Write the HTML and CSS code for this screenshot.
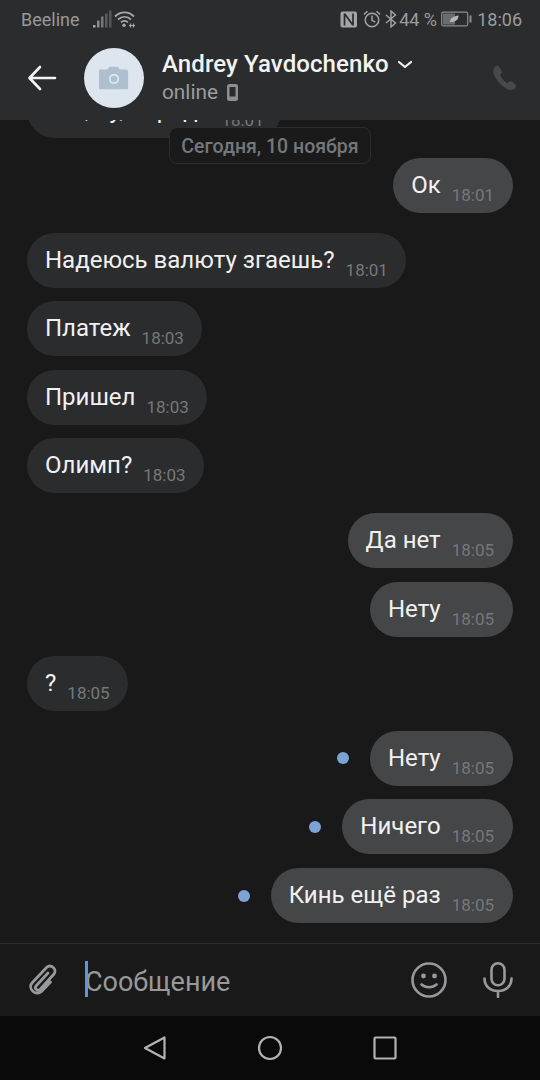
FILE: index.html
```html
<!DOCTYPE html>
<html lang="ru">
<head>
<meta charset="utf-8">
<title>Andrey Yavdochenko</title>
<link rel="stylesheet" href="styles.css">
</head>
<body>
<div class="app">
  <header class="top">
    <div class="status">
      <div class="status-left">
        <span class="carrier">Beeline</span>
        <svg class="ic-signal" width="20" height="18" viewBox="0 0 20 18"><rect x="1" y="15" width="2.500" height="2.500" fill="#a6a8aa"/><rect x="5" y="10.500" width="2.500" height="7" fill="#8a8c8e"/><rect x="9" y="6.500" width="2.500" height="11" fill="#77797b"/><rect x="13" y="3.500" width="2.500" height="14" fill="#5a5c5e"/><rect x="17" y="0.500" width="2.500" height="17" fill="#55575a"/></svg>
        <svg class="ic-wifi" width="22" height="18" viewBox="0 0 22 18" fill="none" stroke="#a6a8aa" stroke-width="1.800"><path d="M1 6.500C6.500 1 14.500 1 20 6.500"/><path d="M4 9.500C8 6 13 6 17 9.500"/><path d="M7 12.300C9.300 10.500 11.700 10.500 14 12.300"/><circle cx="10" cy="15.300" r="1.700" fill="#a6a8aa" stroke="none"/><path d="M15 15.500h6M16.500 13.500v4M19.500 13.500v4" stroke-width="1.200"/></svg>
      </div>
      <div class="status-right">
        <svg class="ic-nfc" width="18" height="17" viewBox="0 0 18 17"><rect x="0.500" y="0.500" width="16.500" height="16" rx="2" fill="#a3a5a7"/><path d="M4.500 2.500v12M13 2.500v12M4.800 3l8 11" fill="none" stroke="#2b2c2e" stroke-width="1.700"/></svg>
        <svg class="ic-alarm" width="18" height="18" viewBox="0 0 18 18" fill="none" stroke="#a3a5a7" stroke-width="1.500"><circle cx="9" cy="10" r="6.800"/><path d="M9 5.500v4.800l3.200 1.900M0.800 4.500L4.500 1.200M17.200 4.500L13.500 1.200"/></svg>
        <svg class="ic-bt" width="12" height="18" viewBox="0 0 12 18" fill="none" stroke="#a3a5a7" stroke-width="1.400"><path d="M1 5l9.500 8-4.500 4V1l4.500 4L1 13"/></svg>
        <span class="batt-pct">44 %</span>
        <svg class="ic-batt" width="31" height="16" viewBox="0 0 31 16"><rect x="0.700" y="1.200" width="26" height="13.600" rx="1.500" fill="none" stroke="#8a8c8e" stroke-width="1.200"/><rect x="2" y="2.500" width="12" height="11" fill="#6a6c6f"/><path d="M9 11c0-4 4-6 8.500-6.500C17.500 9 14 11.500 9 11z" fill="#b5b7b9"/><rect x="28.500" y="4.500" width="2" height="7" fill="#8a8c8e"/></svg>
        <span class="clock">18:06</span>
      </div>
    </div>
    <div class="bar">
      <svg class="ic-back" width="30" height="26" viewBox="0 0 30 26" fill="none" stroke="#f2f3f4" stroke-width="2.600" stroke-linecap="round" stroke-linejoin="round"><path d="M28 13H3M13 2L2.500 13 13 24"/></svg>
      <div class="avatar">
        <svg class="ic-cam" width="30" height="24" viewBox="0 0 32 24"><path d="M3 3h6l2-3h9l2 3h7a2 2 0 0 1 2 1.500V23a1 1 0 0 1-1 1H1a1 1 0 0 1-1-1V5a2 2 0 0 1 3-2z" fill="#aebfd0"/><circle cx="16" cy="13" r="5.500" fill="#dde6ee"/><circle cx="16" cy="13" r="3.500" fill="#aebfd0"/></svg>
      </div>
      <div class="who">
        <div class="name-row">
          <span class="name">Andrey Yavdochenko</span>
          <svg width="16" height="9" viewBox="0 0 16 9" fill="none" stroke="#f2f3f4" stroke-width="2.200" stroke-linecap="round" stroke-linejoin="round"><path d="M2 2l6 5 6-5"/></svg>
        </div>
        <div class="presence">
          <span>online</span>
          <svg width="11" height="17" viewBox="0 0 11 17"><rect x="0" y="0" width="11" height="17" rx="2.500" fill="#8b8e92"/><rect x="2.500" y="3" width="6" height="9.500" fill="#2b2c2e"/></svg>
        </div>
      </div>
      <svg class="ic-phone" width="28" height="28" viewBox="0 0 24 24"><path d="M6.600 1.800c-1-.6-2.500-.3-3.400.8C1.800 4.300 1.500 6.500 2.600 9.300c2 5 6.600 10 11.700 12.300 2.700 1.100 5 .6 6.300-.9.900-1 1-2.300.2-3.200l-2.500-2.300c-.9-.7-2-.6-2.900.1l-1.300 1.200c-2.800-1.500-5.100-4.100-6.400-7l1.200-1.300c.7-.9.700-2-.1-2.900z" fill="#47494c"/></svg>
    </div>
  </header>

  <main class="chat">
    <div class="date">Сегодня, 10 ноября</div>
    <div class="list">
      <div class="group in"><div class="bubble"><span class="txt">Вот, ну, корадe</span><span class="tm">18:01</span></div></div>
      <div class="group out"><div class="bubble"><span class="txt">Ок</span><span class="tm">18:01</span></div></div>
      <div class="group in">
        <div class="bubble"><span class="txt">Надеюсь валюту згаешь?</span><span class="tm">18:01</span></div>
        <div class="bubble"><span class="txt">Платеж</span><span class="tm">18:03</span></div>
        <div class="bubble"><span class="txt">Пришел</span><span class="tm">18:03</span></div>
        <div class="bubble"><span class="txt">Олимп?</span><span class="tm">18:03</span></div>
      </div>
      <div class="group out">
        <div class="bubble"><span class="txt">Да нет</span><span class="tm">18:05</span></div>
        <div class="bubble"><span class="txt">Нету</span><span class="tm">18:05</span></div>
      </div>
      <div class="group in"><div class="bubble"><span class="txt">?</span><span class="tm">18:05</span></div></div>
      <div class="group out">
        <div class="row"><i class="dot"></i><div class="bubble"><span class="txt">Нету</span><span class="tm">18:05</span></div></div>
        <div class="row"><i class="dot"></i><div class="bubble"><span class="txt">Ничего</span><span class="tm">18:05</span></div></div>
        <div class="row"><i class="dot"></i><div class="bubble"><span class="txt">Кинь ещё раз</span><span class="tm">18:05</span></div></div>
      </div>
    </div>
  </main>

  <footer class="composer">
    <svg class="ic-clip" width="32" height="36" viewBox="0 0 32 36" fill="none" stroke="#97999b" stroke-width="2.800" stroke-linecap="round"><path d="M21 11L9 24c-2 2.500 1.500 5.500 4 3.500L27 12c3.500-4.500-3-10.500-7.500-6.500L5 21c-4.500 5.500 3.500 13.500 9.500 8.500l9-9.500"/></svg>
    <div class="field"><i class="caret"></i><span class="placeholder">Сообщение</span></div>
    <svg class="ic-smile" width="36" height="36" viewBox="0 0 36 36" fill="none" stroke="#97999b" stroke-width="2.600" stroke-linecap="round"><circle cx="18" cy="18" r="16.500"/><circle cx="12.500" cy="14" r="2.400" fill="#97999b" stroke="none"/><circle cx="23.500" cy="14" r="2.400" fill="#97999b" stroke="none"/><path d="M10.500 22.500c4 3.600 11 3.600 15 0"/></svg>
    <svg class="ic-mic" width="30" height="36" viewBox="0 0 30 36" fill="none" stroke="#97999b" stroke-width="2.600" stroke-linecap="round"><rect x="8.500" y="1.300" width="13" height="22" rx="6.500"/><path d="M1.500 16.500c0 8 6 12.500 13.500 12.500s13.500-4.500 13.500-12.500M15 29v6"/></svg>
  </footer>

  <nav class="nav">
    <svg width="24" height="26" viewBox="0 0 24 26" fill="none" stroke="#b3b3b3" stroke-width="2.200" stroke-linejoin="round"><path d="M21.500 2.500v21L2 13z"/></svg>
    <svg width="26" height="26" viewBox="0 0 26 26" fill="none" stroke="#b3b3b3" stroke-width="2.200"><circle cx="13" cy="13" r="11"/></svg>
    <svg width="24" height="24" viewBox="0 0 24 24" fill="none" stroke="#b3b3b3" stroke-width="2.200" stroke-linejoin="round"><rect x="1.500" y="1.500" width="21" height="21" rx="1"/></svg>
  </nav>
</div>
</body>
</html>
```
FILE: styles.css
```css
* { box-sizing: border-box; }
html, body { margin: 0; padding: 0; background: #19191a; }
body { font-family: Roboto, "Noto Sans", sans-serif; }
.app { width: 540px; height: 1080px; display: flex; flex-direction: column; overflow: hidden; }

.top { height: 120px; flex: none; background: #2b2c2e; position: relative; z-index: 2; }
.status { height: 36px; display: flex; justify-content: space-between; align-items: center; padding: 2px 18px 0 21px; }
.status-left, .status-right { display: flex; align-items: center; }
.carrier { font-size: 18px; color: #97999b; margin-right: 12px; }
.ic-signal { margin-right: 2px; }
.status-right { color: #9a9c9e; font-size: 16px; }
.ic-nfc { margin-right: 5px; }
.ic-alarm { margin-right: 4px; }
.ic-bt { margin-right: 2px; }
.batt-pct { margin-right: 5px; font-size: 18px; width: 37px; white-space: nowrap; }
.ic-batt { margin-right: 5px; }
.clock { font-size: 18px; }

.bar { height: 84px; display: flex; align-items: center; padding: 0 21px 0 27px; }
.ic-back { flex: none; margin-right: 27px; }
.avatar { width: 60px; height: 60px; border-radius: 50%; background: #dde6ee; display: flex; align-items: center; justify-content: center; flex: none; margin-right: 18px; }
.who { flex: 1; display: flex; flex-direction: column; }
.name-row { display: flex; align-items: center; gap: 8px; height: 28px; }
.name { font-size: 24px; font-weight: 500; color: #f2f3f4; letter-spacing: 0.100px; }
.presence { display: flex; align-items: center; gap: 9px; font-size: 20.800px; color: #9a9c9e; height: 28px; }
.ic-phone { flex: none; }

.chat { flex: 1; min-height: 0; position: relative; overflow: hidden; background: #19191a; display: flex; flex-direction: column; justify-content: flex-end; }
.date { position: absolute; top: 7px; left: 169px; width: 202px; height: 37px; border: 1px solid #2b2c2e; border-radius: 8px; background: #1a1a1b; color: #74777b; font-size: 19.500px; font-weight: 500; display: flex; align-items: center; justify-content: center; padding-top: 1px; z-index: 1; }
.list { display: flex; flex-direction: column; gap: 19.600px; padding: 0 27px 20px; flex: none; }
.group { display: flex; flex-direction: column; gap: 13.600px; }
.group.in { align-items: flex-start; }
.group.out { align-items: flex-end; }
.row { display: flex; align-items: center; gap: 21px; }
.dot { width: 12px; height: 12px; border-radius: 50%; background: #7ba4d4; flex: none; }
.bubble { height: 55px; border-radius: 27.500px; padding: 0 19px 0 18px; display: flex; align-items: center; }
.in .bubble { background: #2b2c2e; padding-right: 18px; }
.out .bubble { background: #454648; }
.txt { font-size: 24px; color: #f1f1f2; margin-top: -1px; }
.tm { font-size: 17px; color: #76787b; margin-left: 11px; margin-top: 19px; }

.composer { height: 73px; flex: none; border-top: 1px solid #2b2c2e; background: #19191a; display: flex; align-items: center; padding: 0 27px; }
.ic-clip { flex: none; margin-right: 26px; }
.field { flex: 1; display: flex; align-items: center; position: relative; }
.caret { position: absolute; left: 0; top: -2px; width: 3px; height: 36px; background: #5b97dc; }
.placeholder { font-size: 27px; color: #97999b; margin-top: 3px; }
.ic-smile { flex: none; margin-right: 36px; }
.ic-mic { flex: none; }

.nav { height: 64px; flex: none; background: #0a0a0a; display: flex; align-items: center; justify-content: center; gap: 90px; }
```
